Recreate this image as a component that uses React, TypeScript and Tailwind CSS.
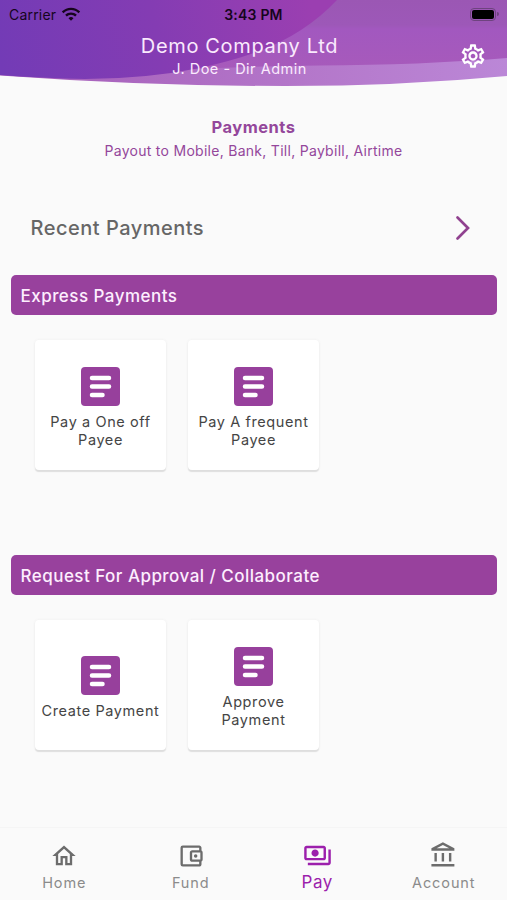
import type { ReactNode } from "react";
import {
  MdOutlineAccountBalance,
  MdOutlineAccountBalanceWallet,
  MdOutlineHome,
  MdOutlinePayments,
  MdOutlineSettings,
  MdWifi,
} from "react-icons/md";

function HeaderWaves() {
  return (
    <svg className="absolute inset-0" width="507" height="92" viewBox="0 0 507 92" aria-hidden="true">
      <defs>
        <linearGradient id="deep" gradientUnits="userSpaceOnUse" x1="0" y1="60" x2="310" y2="0">
          <stop offset="0" stopColor="#733bb6" />
          <stop offset="0.5" stopColor="#843cb3" />
          <stop offset="1" stopColor="#9b3fb1" />
        </linearGradient>
        <linearGradient id="mid" x1="0" y1="0" x2="0" y2="1">
          <stop offset="0" stopColor="#9b57b4" />
          <stop offset="0.36" stopColor="#9d58b8" />
          <stop offset="0.42" stopColor="#a258bf" />
          <stop offset="1" stopColor="#a75abb" />
        </linearGradient>
        <linearGradient id="pale" x1="0" y1="0" x2="1" y2="0">
          <stop offset="0" stopColor="#a45cb8" />
          <stop offset="0.6" stopColor="#b477ca" />
          <stop offset="1" stopColor="#bb87d7" />
        </linearGradient>
      </defs>
      <path d="M0 0H507V76Q400 86 285 86Q145 86 0 75.5Z" fill="url(#pale)" />
      <path d="M170 0H507V58Q420 65 320 65.500Q255 66 195 69Z" fill="url(#mid)" />
      <path d="M0 0H337Q305 34 257 52Q232 61 200 68Q145 79 85 79Q40 78 0 75Z" fill="url(#deep)" />
    </svg>
  );
}

function Header() {
  return (
    <header className="relative h-[92px] shrink-0">
      <HeaderWaves />
      <div className="relative grid h-7 grid-cols-3 items-center px-2 text-[14px] text-[#16051d]">
        <div className="flex items-center gap-[5px] pl-px">
          <span className="tracking-[0.2px]">Carrier</span>
          <MdWifi size={20} />
        </div>
        <span className="text-center font-semibold tracking-[0.2px]">3:43 PM</span>
        <div className="flex items-center justify-end">
          <div className="h-[13px] w-[26px] rounded-[4px] border border-[#6e437f] p-[1px]">
            <div className="h-full rounded-[2px] bg-black" />
          </div>
          <div className="ml-px h-1 w-[2px] rounded-r bg-[#6e437f]" />
        </div>
      </div>
      <div className="relative flex justify-center pl-[13px] pr-[20px] text-[#faeafd]">
        <div className="flex flex-1 flex-col items-center pl-[7px] pt-[6px]">
          <h1 className="text-[20px] leading-[25px] tracking-[0.65px]">Demo Company Ltd</h1>
          <p className="text-[14.5px] leading-5 tracking-[0.5px]">J. Doe - Dir Admin</p>
        </div>
        <MdOutlineSettings size={28} className="mt-[14px] text-white" />
      </div>
    </header>
  );
}

function SectionBar({ children }: { children: ReactNode }) {
  return (
    <h2 className="flex h-10 items-center rounded-[5px] bg-[#98419d] px-[10px] pt-[3px] text-[17px] font-medium tracking-[0.47px] text-[#fdeefe]">
      {children}
    </h2>
  );
}

function DocIcon() {
  return (
    <svg width="39" height="39" viewBox="0 0 39 39" aria-hidden="true">
      <rect width="39" height="39" rx="4" fill="#97409c" />
      <path d="M11 11H28M11 19.600H28M11 28H21.500" stroke="#fff" strokeWidth="4.500" strokeLinecap="round" />
    </svg>
  );
}

function ActionCard({ lines }: { lines: string[] }) {
  return (
    <button className="flex h-[130px] w-[131px] flex-col items-center justify-center rounded-[4px] bg-white pt-[5px] text-[14.5px] leading-[18px] tracking-[0.6px] text-[#454545] shadow-[0_2px_1px_#dedede,0_0_3px_#ededed]">
      <DocIcon />
      <span className="mt-[7px] flex flex-col items-center">
        {lines.map((line) => (
          <span key={line} className="whitespace-nowrap">{line}</span>
        ))}
      </span>
    </button>
  );
}

function NavItem({ icon, label, active = false }: { icon: ReactNode; label: string; active?: boolean }) {
  return (
    <a className={active ? "flex w-[126.5px] flex-col items-center text-[#9c1fac]" : "flex w-[126.5px] flex-col items-center text-[#6c6c6c]"}>
      <span className="flex h-[29px] items-center">{icon}</span>
      <span className={active ? "text-[17px] leading-6 tracking-[0.6px]" : "text-[14.5px] leading-[25px] tracking-[0.9px] text-[#8b8b8b]"}>{label}</span>
    </a>
  );
}

export default function App() {
  return (
    <div className="flex h-[900px] w-[507px] flex-col overflow-hidden bg-[#fafafa] font-['Inter','Liberation_Sans',sans-serif]">
      <Header />
      <main className="flex flex-1 flex-col px-[10.5px]">
        <div className="flex flex-col items-center pt-6 text-[#94479b]">
          <h2 className="text-[16.5px] font-bold leading-[22px] tracking-[0.5px]">Payments</h2>
          <p className="mt-[2px] text-[14px] leading-[22px] tracking-[0.28px]">Payout to Mobile, Bank, Till, Paybill, Airtime</p>
        </div>
        <button className="mt-[50px] flex h-8 items-center justify-between pl-5 pr-[26px] text-[20px] font-medium tracking-[0.5px] text-[#666]">
          Recent Payments
          <svg width="16" height="26" viewBox="0 0 16 26" fill="none" aria-hidden="true">
            <path d="M2.500 2.500L13 13L2.500 23.500" stroke="#90418f" strokeWidth="2.700" strokeLinecap="round" />
          </svg>
        </button>
        <section className="mt-[31px]">
          <SectionBar>Express Payments</SectionBar>
          <div className="mt-[25px] flex gap-[22px] pl-[24.5px]">
            <ActionCard lines={["Pay a One off", "Payee"]} />
            <ActionCard lines={["Pay A frequent", "Payee"]} />
          </div>
        </section>
        <section className="mt-[85px]">
          <SectionBar>Request For Approval / Collaborate</SectionBar>
          <div className="mt-[25px] flex gap-[22px] pl-[24.5px]">
            <ActionCard lines={["Create Payment"]} />
            <ActionCard lines={["Approve", "Payment"]} />
          </div>
        </section>
      </main>
      <nav className="flex h-[73px] shrink-0 justify-between border-t border-[#f5f5f5] pt-[13px] pl-px">
        <NavItem icon={<MdOutlineHome size={28} />} label="Home" />
        <NavItem icon={<MdOutlineAccountBalanceWallet size={28} />} label="Fund" />
        <NavItem icon={<MdOutlinePayments size={29} />} label="Pay" active />
        <NavItem icon={<MdOutlineAccountBalance size={29} />} label="Account" />
      </nav>
    </div>
  );
}
